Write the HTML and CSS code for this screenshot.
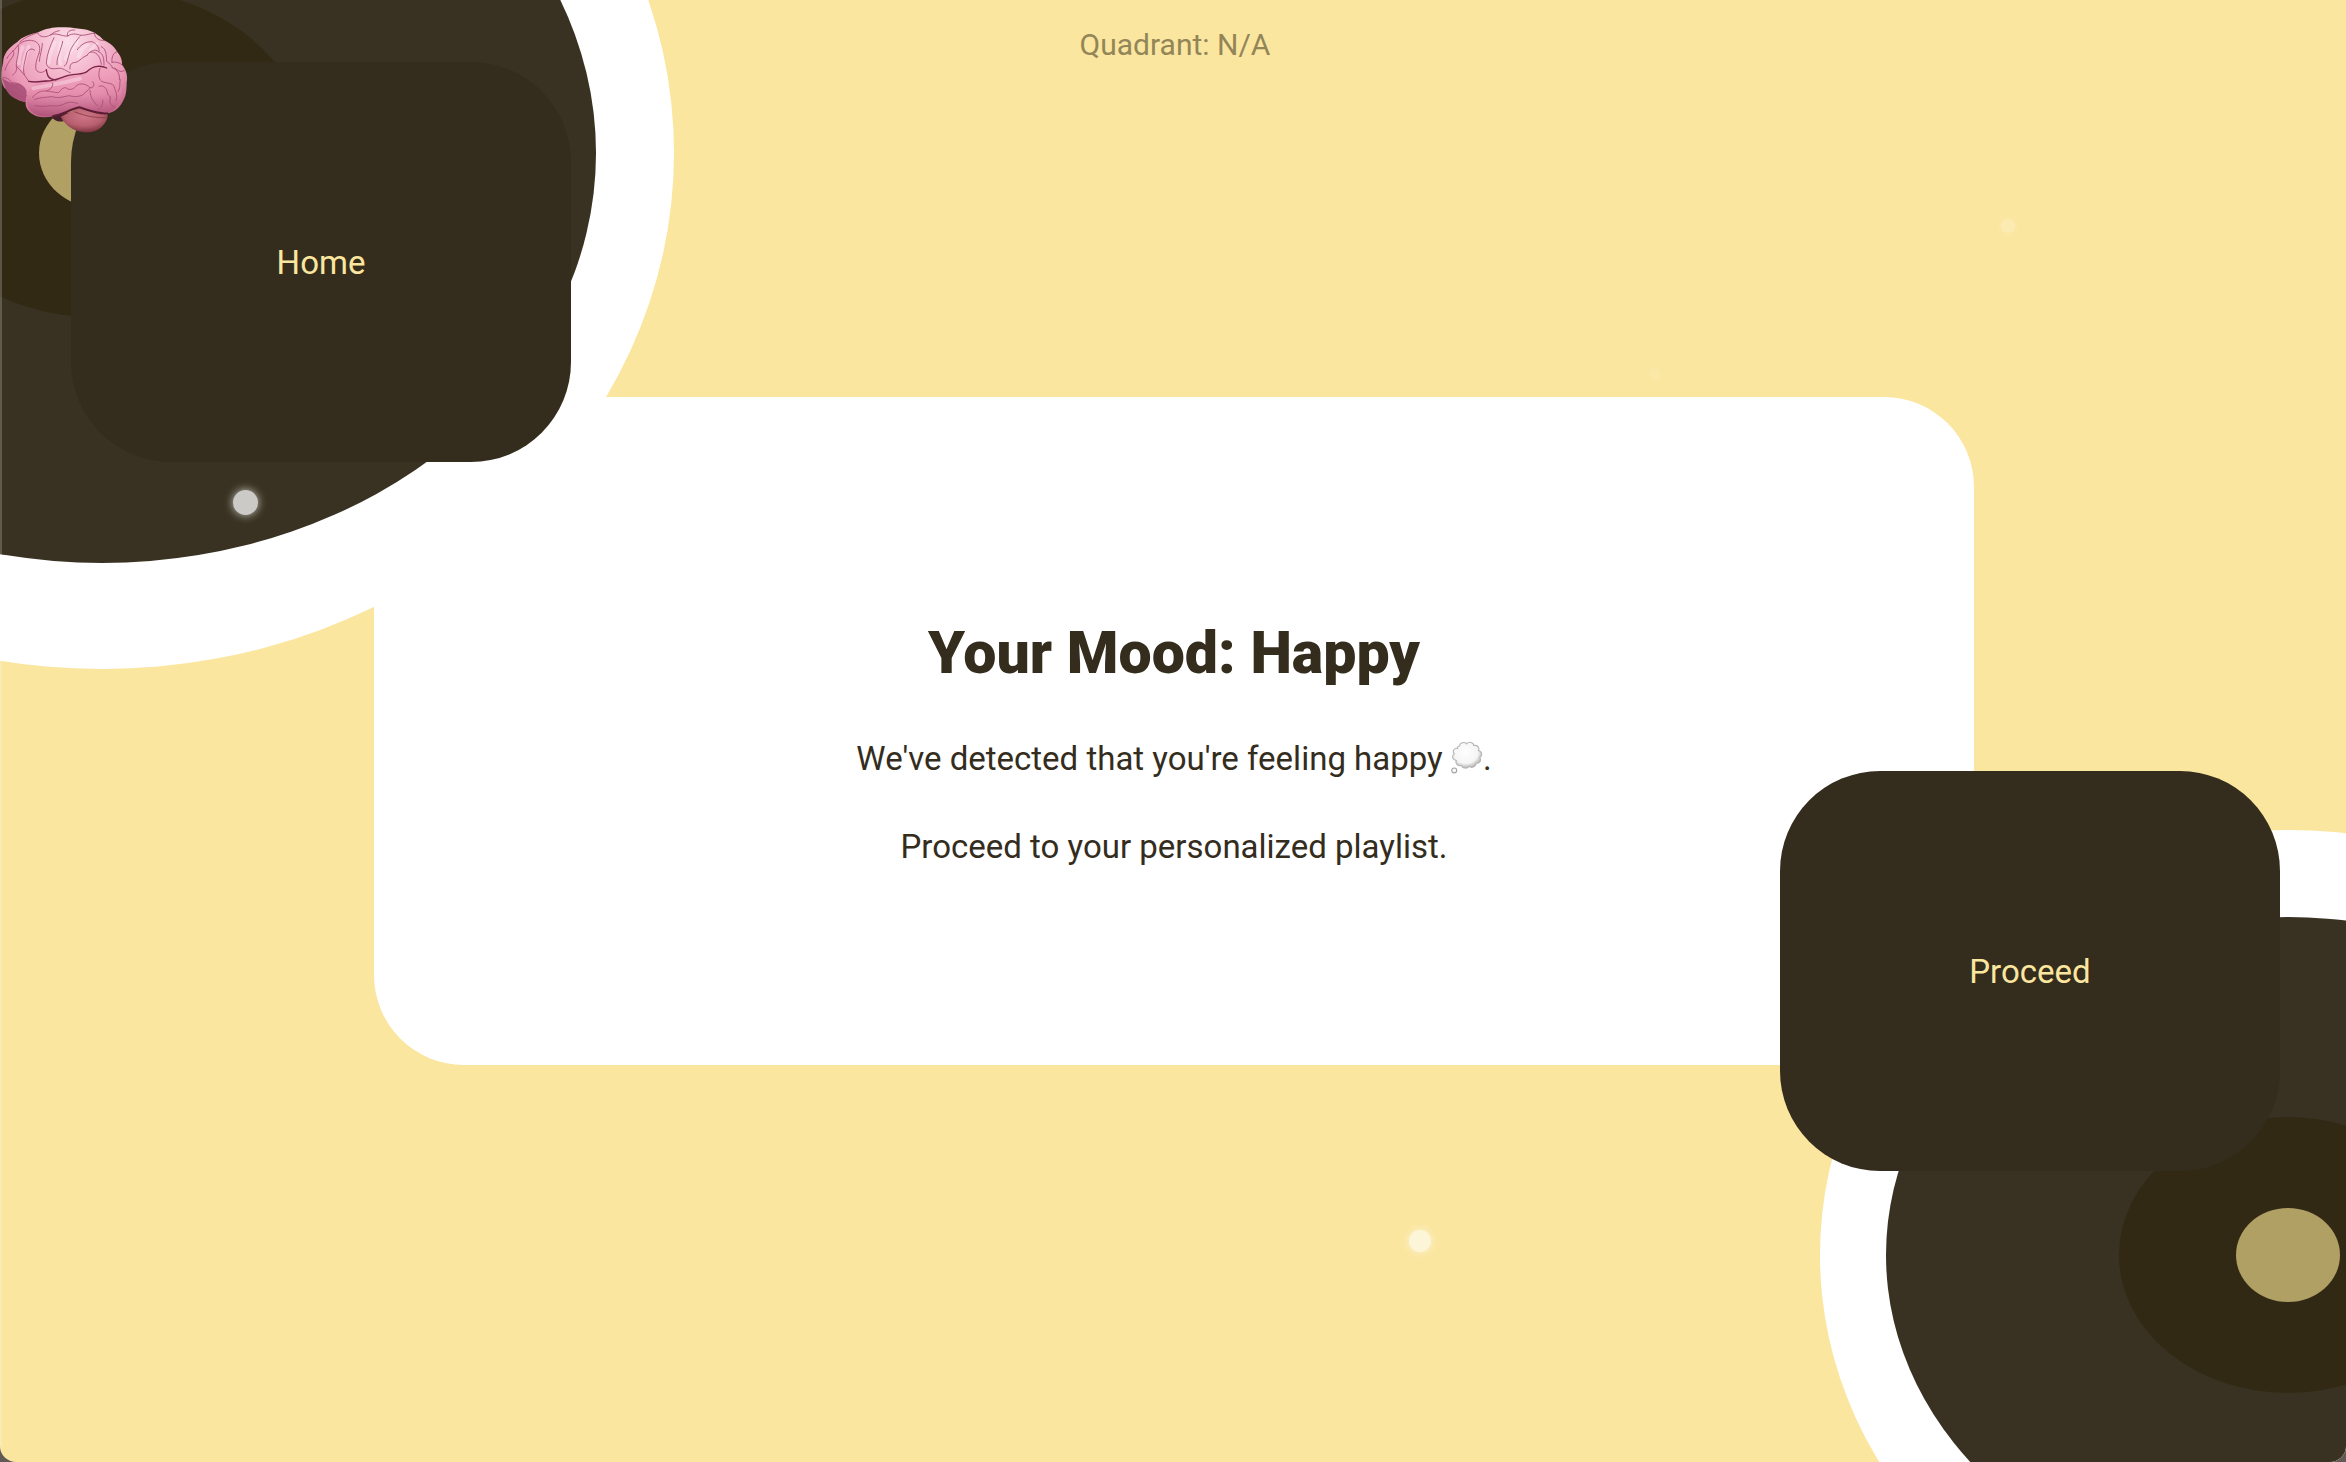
FILE: index.html
```html
<!DOCTYPE html>
<html lang="en">
<head>
<meta charset="utf-8">
<title>Your Mood</title>
<link rel="stylesheet" href="styles.css">
</head>
<body>
<div class="page">
  <main class="card">
    <h1 class="title">Your Mood: Happy</h1>
    <p class="text">We've detected that you're feeling happy
      <svg class="bubble" viewBox="0 0 90 96" role="img" aria-label="thought bubble">
        <defs>
          <radialGradient id="cloud" cx="45%" cy="40%" r="60%"><stop offset="0" stop-color="#fff"/><stop offset=".7" stop-color="#f5f5f5"/><stop offset="1" stop-color="#b4b4b4"/></radialGradient>
        </defs>
        <path d="M24 14C24 5 38 1 44 8C50 0 64 4 64 13C74 10 82 19 77 27C88 29 89 42 81 46C87 55 80 65 71 62C70 74 57 78 51 71C45 80 31 77 29 69C18 72 11 62 15 55C4 54 1 42 9 37C2 28 10 18 18 21C17 18 20 14 24 14Z" fill="url(#cloud)" stroke="#b6b6b6" stroke-width="3"/>
        <circle cx="9" cy="83" r="7" fill="url(#cloud)" stroke="#a4a4a4" stroke-width="3"/>
      </svg>.</p>
    <p class="text">Proceed to your personalized playlist.</p>
  </main>
  <div class="disc disc-home" aria-hidden="true"><div class="vinyl"><div class="label"><div class="hole"></div></div></div></div>
  <div class="disc disc-proceed" aria-hidden="true"><div class="vinyl"><div class="label"><div class="hole"></div></div></div></div>
  <p class="quadrant">Quadrant: N/A</p>
  <button class="action action-home" type="button">Home</button>
  <button class="action action-proceed" type="button">Proceed</button>
  <svg class="brain" viewBox="0 75 390 330" role="img" aria-label="brain">
    <defs>
      <radialGradient id="lobe" gradientUnits="userSpaceOnUse" cx="205" cy="125" r="250"><stop offset="0" stop-color="#fbdfe9"/><stop offset=".4" stop-color="#f4b8cd"/><stop offset=".75" stop-color="#ea98b5"/><stop offset="1" stop-color="#c8698e"/></radialGradient>
      <radialGradient id="stem" cx="50%" cy="35%" r="65%"><stop offset="0" stop-color="#cf7788"/><stop offset=".6" stop-color="#b9606f"/><stop offset="1" stop-color="#7d3441"/></radialGradient>
      <linearGradient id="temple" x1="0" y1="0" x2="0" y2="1"><stop offset="0" stop-color="#f3a4bf"/><stop offset=".55" stop-color="#e287a7"/><stop offset="1" stop-color="#a0446b"/></linearGradient>
    </defs>
    <path d="M150 345C160 362 178 368 192 363L230 335Z" fill="#43202a"/>
    <path d="M182 350C200 385 235 399 270 397C302 393 324 365 323 342L240 322Z" fill="url(#stem)"/>
    <path d="M5 215C6 200 10 188 10 180C14 156 30 140 52 126C65 110 90 102 112 98C140 84 165 81 190 82C215 81 235 87 252 88C275 92 297 104 311 121C330 128 345 143 351 155C364 169 367 184 366 194C379 210 384 229 380 247C380 270 378 287 372 297C362 321 345 337 322 340C290 342 265 330 238 322C205 330 185 346 160 348C135 355 112 352 97 342C80 333 76 318 77 307C55 302 30 292 18 268C6 258 3 240 5 215Z" fill="url(#lobe)"/>
    <path d="M80 302C76 274 94 252 124 245C160 243 176 235 205 226C238 220 248 224 264 209C280 194 308 194 320 206C344 215 350 239 361 253C370 276 361 316 336 334C297 343 260 325 238 322C205 330 185 346 160 348C127 355 83 346 80 302Z" fill="url(#temple)" opacity=".7"/>
    <path d="M6 235C20 242 30 252 52 250C66 253 76 262 80 275L77 307C55 302 27 290 18 268Z" fill="#9d456d" opacity=".75"/>
    <g fill="none" stroke-linecap="round" stroke-linejoin="round">
      <path d="M232 122C218 144 206 158 197 176M163 128C152 150 146 166 146 190M184 130C178 152 176 177 182 192M290 132C280 138 276 145 272 152M86 140C76 164 72 180 68 205M68 142C58 160 56 176 57 190M262 134C250 140 242 150 236 170M100 265C130 258 190 250 240 236" stroke="#fff3f8" stroke-width="12" opacity=".35"/>
      <path d="M112 98C98 105 78 108 60 126M112 98C119 112 135 114 151 105C167 96 187 110 203 108C219 97 235 104 242 106M151 105C160 98 166 94 178 92M203 108C198 96 211 88 224 90M242 106C260 107 276 98 284 100M284 100C281 112 300 124 311 121M20 176C27 161 42 153 54 136C68 121 92 117 107 125C121 133 121 148 117 160M38 152C46 160 38 170 33 177C23 190 17 201 15 211M54 136C61 154 48 179 49 198C51 211 48 218 38 225M73 224C66 206 76 182 80 159C87 144 99 145 104 151M117 160C110 177 105 195 108 209C115 221 132 219 139 209M127 130C127 150 119 165 118 184M162 113C151 137 141 161 139 188C141 207 157 208 174 205C190 203 196 213 211 218M188 124C184 150 169 171 171 194M239 110C223 129 210 147 207 165C201 180 203 193 193 198M232 149C240 136 257 124 276 125C291 130 301 148 296 155C284 145 268 154 261 166M261 166C241 174 238 188 220 188C212 190 208 199 210 207M270 157C285 152 301 165 304 193M296 155C311 161 312 178 312 195M304 140C321 147 318 167 320 184C329 191 337 198 337 203M351 155C340 158 334 171 336 187M336 187C346 184 358 188 366 194M337 203C352 208 361 223 358 239M373 212C357 220 350 206 343 204M6 235C17 226 29 242 38 248C57 249 68 256 77 271M49 198C63 215 75 224 86 244C103 250 121 244 140 243M20 260C32 254 51 260 63 277C73 282 79 281 80 288M30 277C46 282 61 290 77 292M97 292C112 277 121 272 139 273C158 275 164 278 176 278C184 270 184 264 197 263C211 275 225 264 229 257C241 249 257 250 270 263C280 266 286 253 278 245M139 273C150 270 160 262 158 249M104 317C121 320 135 320 150 317C167 319 181 318 192 312C209 304 220 306 233 311M104 298C120 292 139 292 157 290C174 296 192 290 207 287C220 290 232 292 248 285C258 274 265 272 270 263M270 271C270 293 281 306 292 317M297 259C308 253 322 264 323 282C326 289 333 287 331 294M300 205C294 224 296 237 305 244C323 252 337 248 342 259C346 276 355 284 348 302M361 239C357 255 363 262 354 275M308 300C310 317 302 324 296 328M331 294C326 307 333 317 344 322" stroke="#ad5079" stroke-width="3" opacity=".9"/>
      <path d="M86 244C103 247 124 245 140 243C165 243 176 235 205 226C238 220 248 224 262 214C280 196 304 196 320 204M139 209C142 232 149 239 168 240" stroke="#7b2549" stroke-width="4"/>
      <path d="M160 348C185 346 205 330 238 322C265 330 290 342 322 340" stroke="#5e1d35" stroke-width="6"/>
      <path d="M225 336C253 347 286 355 320 352" stroke="#984652" stroke-width="4"/>
    </g>
  </svg>
  <span class="spark spark-a"></span>
  <span class="spark spark-b"></span>
  <span class="spark spark-c"></span>
  <span class="spark spark-d"></span>
</div>
</body>
</html>
```
FILE: styles.css
```css
* { box-sizing: border-box; }

html { background: #625a55; }

body {
  margin: 0;
  font-family: Roboto, "Liberation Sans", sans-serif;
  color: #342d1e;
}

.page {
  position: relative;
  display: grid;
  place-items: center;
  min-height: 100vh;
  padding: 120px 16px 120px 18px;
  overflow: hidden;
  border-radius: 0 0 16px 16px;
  background: #fbe69f;
}

/* light edge of the window frame */
.page::after {
  content: "";
  position: absolute;
  top: 0;
  bottom: 0;
  left: 0;
  width: 2px;
  background: rgba(255, 255, 255, 0.2);
}

.disc {
  position: absolute;
  display: grid;
  place-items: center;
  border-radius: 50%;
  background: #fff;
}

.disc div {
  display: grid;
  place-items: center;
  border-radius: 50%;
}

.disc .vinyl { background: #393222; }
.disc .label { background: #322914; }
.disc .hole { background: #b1a064; }

.disc-home { left: -470px; top: -363px; width: 1144px; height: 1032px; }
.disc-home .vinyl { width: 988px; height: 820px; }
.disc-home .label { width: 414px; height: 330px; }
.disc-home .hole { width: 126px; height: 112px; }

.disc-proceed { right: -410px; bottom: -218px; width: 936px; height: 850px; }
.disc-proceed .vinyl { width: 804px; height: 676px; }
.disc-proceed .label { width: 338px; height: 276px; }
.disc-proceed .hole { width: 104px; height: 94px; }

.quadrant {
  position: absolute;
  top: 25px;
  left: 4px;
  right: 0;
  margin: 0;
  font-size: 30px;
  line-height: 40px;
  text-align: center;
  color: #928558;
}

.card {
  display: flex;
  flex-direction: column;
  align-items: center;
  justify-content: center;
  gap: 48px;
  width: 100%;
  max-width: 1600px;
  min-height: 668px;
  padding: 72px 48px 48px;
  border-radius: 90px;
  background: #fff;
  text-align: center;
}

.title {
  margin: 0 0 4px;
  font-size: 59px;
  font-weight: 900;
  line-height: 68px;
}

.text {
  margin: 0;
  font-size: 33px;
  line-height: 40px;
}

.bubble {
  width: 32px;
  height: 34px;
  vertical-align: -5px;
}

.action {
  position: absolute;
  width: 500px;
  height: 400px;
  border: 0;
  border-radius: 100px;
  background: #342d1e;
  color: #fbe69f;
  font: inherit;
  font-size: 33px;
  cursor: pointer;
}

.action-home { left: 71px; top: 62px; }
.action-proceed { right: 66px; bottom: 291px; }

.brain {
  position: absolute;
  left: 0;
  top: 25px;
  width: 130px;
  height: 110px;
}

.spark {
  position: absolute;
  border-radius: 50%;
  background: #fff;
  box-shadow: 0 0 10px #fff;
}

.spark-a { left: 233px; top: 490px; width: 25px; height: 25px; opacity: 0.74; }
.spark-b { left: 1409px; top: 1230px; width: 22px; height: 22px; opacity: 0.6; }
.spark-c { left: 2001px; top: 219px; width: 14px; height: 14px; opacity: 0.2; }
.spark-d { left: 1649px; top: 368px; width: 12px; height: 12px; opacity: 0.07; }
```
